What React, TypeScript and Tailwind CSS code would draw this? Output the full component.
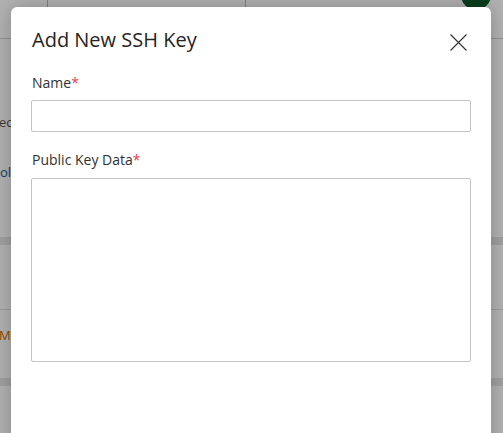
import React from "react";

export default function App() {
  return (
    <div className="relative w-[503px] h-[433px] overflow-hidden bg-white" style={{ fontFamily: '"Open Sans", "Noto Sans", sans-serif' }}>
      {/* background page */}
      <div className="flex flex-col w-full h-full">
        <div className="flex h-[39px] border-b border-[#d0d0d0] bg-white">
          <div className="w-[48px] border-r border-[#bdbdbd]" />
          <div className="w-[198px] border-r border-[#bdbdbd]" />
          <div className="flex-1" />
        </div>
        <div className="flex flex-col text-[13px] leading-[20px]">
          <div className="h-[93px] flex items-end text-[#555] overflow-hidden">
            <span className="-ml-[1px]">eco</span>
          </div>
          <div className="h-[50px] flex items-end text-[#0f5a9e] overflow-hidden">
            <span>ol</span>
          </div>
          <div className="h-[63px] border-b-[8px] border-[#e6e6e6]" />
          <div className="h-[65px] border-b border-[#e0e0e0]" />
          <div className="h-[68px] flex items-start pt-[15px] text-[#c46a00] overflow-hidden">
            <span className="-ml-[1px]">M</span>
          </div>
          <div className="flex-1 border-t-[8px] border-[#e6e6e6]" />
        </div>
      </div>
      <div className="absolute right-[12px] top-[-20px] w-[30px] h-[30px] rounded-full bg-[#0b5a28]" />

      {/* overlay */}
      <div className="absolute inset-0 bg-[rgba(0,0,0,0.3)]" />

      {/* modal */}
      <div className="absolute left-[11px] top-[7px] w-[480px] h-[460px] bg-white rounded-[6px] shadow-[0_0_20px_rgba(0,0,0,0.25)] px-[20px] pt-[19px]">
        <div className="flex items-start justify-between">
          <h1 className="text-[20px] leading-[28px] text-[#252423] pl-[1px]">Add New SSH Key</h1>
          <button className="mt-[7px] mr-[4px] w-[18px] h-[18px] flex items-center justify-center text-[#323130]">
            <svg width="17" height="17" viewBox="0 0 17 17" fill="none" stroke="currentColor" strokeWidth="1.1">
              <path d="M0.5 0.5 L16.5 16.5 M16.5 0.5 L0.5 16.5" />
            </svg>
          </button>
        </div>
        <div className="mt-[19px] text-[14px] leading-[20px] text-[#323130] pl-[1px]">
          Name<span className="text-[#e3424a]">*</span>
        </div>
        <div className="mt-[7px] h-[32px] border border-[#c4c4c4] rounded-[2px]" />
        <div className="mt-[18px] text-[14px] leading-[20px] text-[#323130] pl-[1px]">
          Public Key Data<span className="text-[#e3424a]">*</span>
        </div>
        <div className="mt-[8px] h-[184px] border border-[#c4c4c4] rounded-[2px]" />
      </div>
    </div>
  );
}
